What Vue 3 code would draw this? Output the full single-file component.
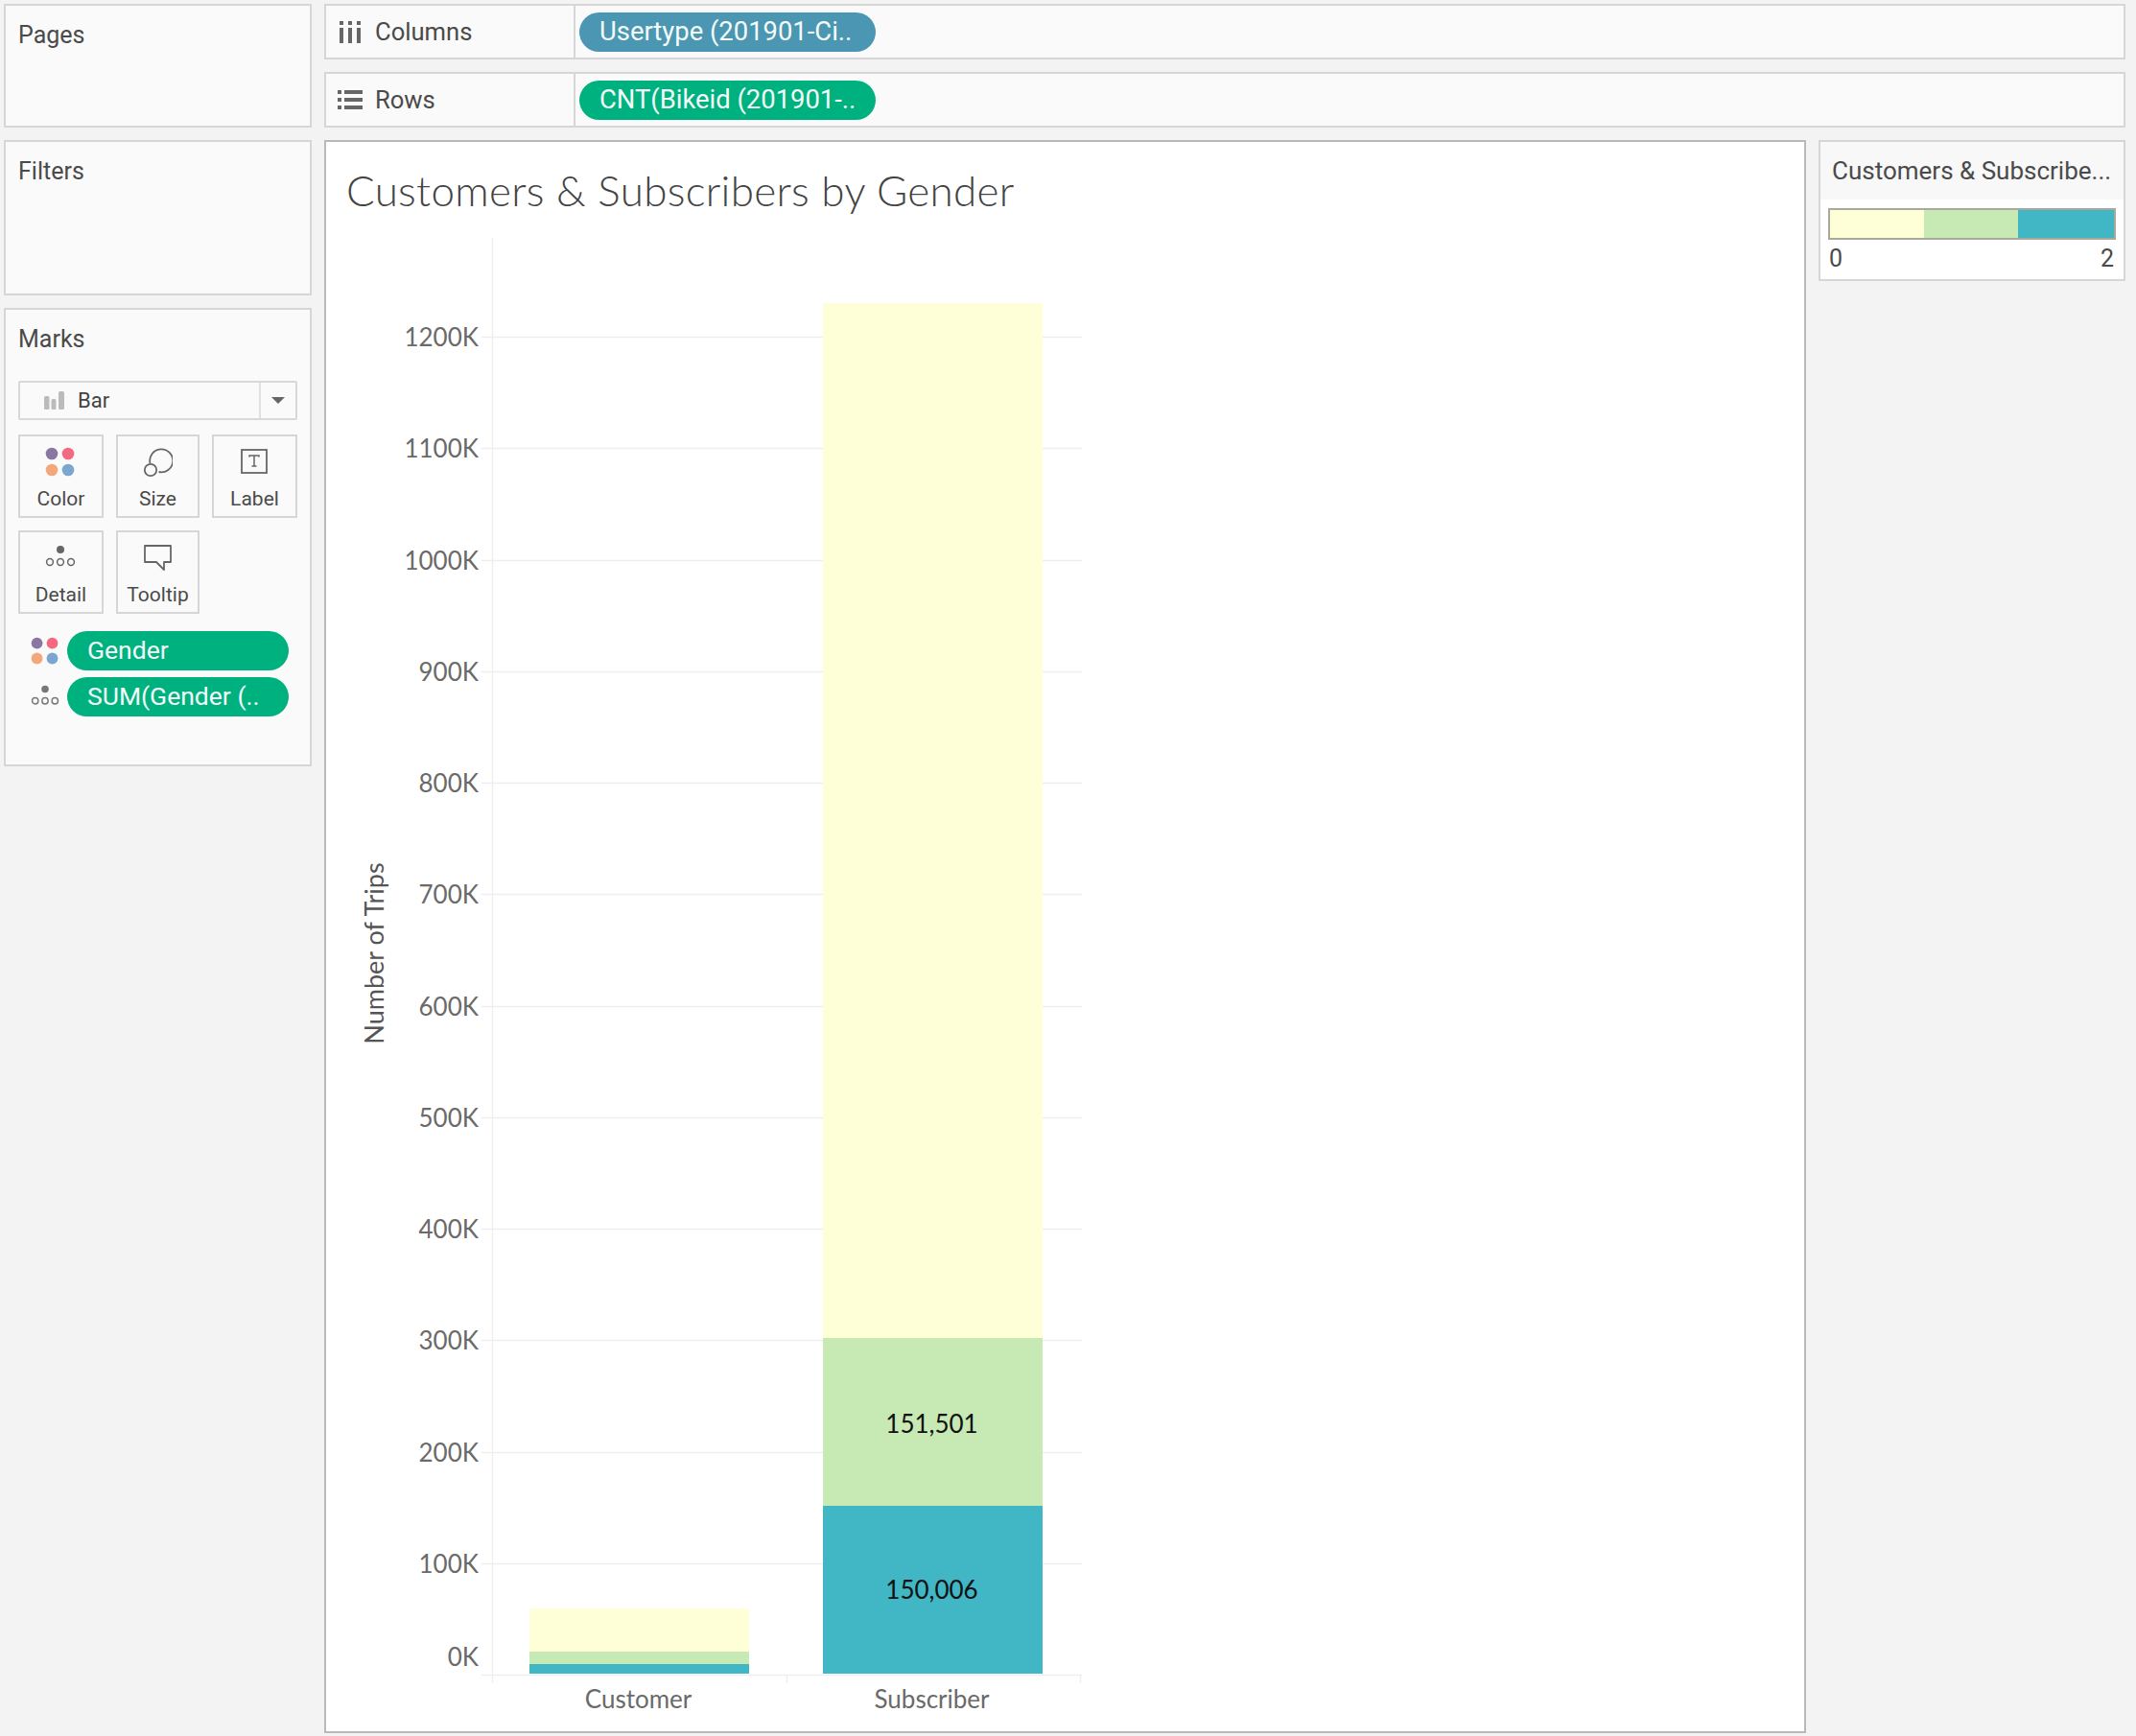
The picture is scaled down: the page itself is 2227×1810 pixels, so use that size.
<script setup>
const ticks = [];
for (let k = 0; k <= 1200; k += 100) {
  // baseline is at y=1746, about 1.1625px per thousand trips
  ticks.push({ label: k + "K", y: Math.round(1746 - k * 1.1625) });
}

const bars = [
  { x: 552, y: 1677, h: 45, fill: "#ffffd7" },
  { x: 552, y: 1722, h: 13, fill: "#c7e9b4" },
  { x: 552, y: 1735, h: 10, fill: "#41b6c4" },
  { x: 858, y: 316, h: 1079, fill: "#ffffd7" },
  { x: 858, y: 1395, h: 175, fill: "#c7e9b4" },
  { x: 858, y: 1570, h: 175, fill: "#41b6c4" }
];

const dotColors = ["#8a76a3", "#f4697f", "#f3a87c", "#7ba6d0"];
</script>

<template>
  <div class="page">
    <aside class="side">
      <section class="card pages"><h3>Pages</h3></section>
      <section class="card filters"><h3>Filters</h3></section>
      <section class="card marks">
        <h3>Marks</h3>
        <div class="mark-type">
          <svg class="bar-icon" width="22" height="20" viewBox="0 0 22 20">
            <rect x="0" y="5" width="5.5" height="14" rx="1.5" fill="#bbb" />
            <rect x="7.5" y="8" width="5" height="11" rx="1.5" fill="#bbb" />
            <rect x="15" y="0" width="6" height="19" rx="1.5" fill="#bbb" />
          </svg>
          <span class="mark-name">Bar</span>
          <div class="mark-arrow"><i></i></div>
        </div>
        <div class="mark-btns">
          <div class="mark-btn">
            <svg width="32" height="32" viewBox="0 0 32 32">
              <circle cx="7" cy="7" r="6.3" :fill="dotColors[0]" />
              <circle cx="24" cy="7" r="6.3" :fill="dotColors[1]" />
              <circle cx="7" cy="24" r="6.3" :fill="dotColors[2]" />
              <circle cx="24" cy="24" r="6.3" :fill="dotColors[3]" />
            </svg>
            <span>Color</span>
          </div>
          <div class="mark-btn">
            <svg width="32" height="32" viewBox="0 0 32 32" fill="none" stroke="#666" stroke-width="1.8">
              <path d="M8.5 17A12 12 0 1 1 17.5 26" />
              <circle cx="9" cy="24" r="6.2" />
            </svg>
            <span>Size</span>
          </div>
          <div class="mark-btn">
            <svg width="32" height="32" viewBox="0 0 32 32" fill="none" stroke="#666" stroke-width="1.8">
              <rect x="3" y="3" width="26" height="24" />
              <path d="M11 10.5V9H21V10.5M16 9V20M13.5 20H18.5" stroke-width="1.5" />
            </svg>
            <span>Label</span>
          </div>
          <div class="mark-btn">
            <svg width="32" height="32" viewBox="0 0 32 32" fill="none" stroke="#666" stroke-width="1.5">
              <circle cx="16" cy="7" r="4" fill="#666" stroke="none" />
              <circle cx="5" cy="20" r="3.4" />
              <circle cx="16" cy="20" r="3.4" />
              <circle cx="27" cy="20" r="3.4" />
            </svg>
            <span>Detail</span>
          </div>
          <div class="mark-btn">
            <svg width="32" height="32" viewBox="0 0 32 32" fill="none" stroke="#666" stroke-width="1.8">
              <path d="M3 3H30V20H23V28L15 20H3Z" stroke-linejoin="round" />
            </svg>
            <span>Tooltip</span>
          </div>
        </div>
        <div class="mark-pill">
          <svg width="30" height="30" viewBox="0 0 32 32">
            <circle cx="7" cy="7" r="6.3" :fill="dotColors[0]" />
            <circle cx="24" cy="7" r="6.3" :fill="dotColors[1]" />
            <circle cx="7" cy="24" r="6.3" :fill="dotColors[2]" />
            <circle cx="24" cy="24" r="6.3" :fill="dotColors[3]" />
          </svg>
          <div class="pill green">Gender</div>
        </div>
        <div class="mark-pill">
          <svg width="30" height="30" viewBox="0 0 32 32" fill="none" stroke="#777" stroke-width="1.5">
            <circle cx="16" cy="7" r="4" fill="#777" stroke="none" />
            <circle cx="5" cy="20" r="3.4" />
            <circle cx="16" cy="20" r="3.4" />
            <circle cx="27" cy="20" r="3.4" />
          </svg>
          <div class="pill green">SUM(Gender (..</div>
        </div>
      </section>
    </aside>

    <main class="main">
      <div class="shelf">
        <div class="shelf-label">
          <svg width="24" height="24" viewBox="0 0 24 24" fill="#666">
            <rect x="1" y="8" width="4" height="16" />
            <rect x="10" y="8" width="4" height="16" />
            <rect x="19" y="8" width="4" height="16" />
            <rect x="1" y="1" width="4" height="4" />
            <rect x="10" y="1" width="4" height="4" />
            <rect x="19" y="1" width="4" height="4" />
          </svg>
          <span>Columns</span>
        </div>
        <div class="pill blue shelf-pill">Usertype (201901-Ci..</div>
      </div>
      <div class="shelf">
        <div class="shelf-label">
          <svg width="26" height="22" viewBox="0 0 26 22" fill="#666">
            <rect x="0" y="1" width="4" height="4" />
            <rect x="7" y="1" width="19" height="4" />
            <rect x="0" y="9" width="4" height="4" />
            <rect x="7" y="9" width="19" height="4" />
            <rect x="0" y="17" width="4" height="4" />
            <rect x="7" y="17" width="19" height="4" />
          </svg>
          <span>Rows</span>
        </div>
        <div class="pill green shelf-pill">CNT(Bikeid (201901-..</div>
      </div>

      <div class="view">
        <div class="chart">
          <svg class="plot" viewBox="340 148 1541 1657" width="1541" height="1657">
            <text x="361" y="215" class="title">Customers &amp; Subscribers by Gender</text>

            <line x1="513.5" y1="248" x2="513.5" y2="1755" class="axis" />
            <line x1="820.5" y1="1746" x2="820.5" y2="1755" class="axis" />
            <line x1="1126.5" y1="1746" x2="1126.5" y2="1755" class="axis" />
            <line
              v-for="t in ticks"
              :key="t.label"
              x1="502"
              x2="1128"
              :y1="t.y + 0.5"
              :y2="t.y + 0.5"
              class="grid"
            />
            <text
              v-for="t in ticks"
              :key="'l' + t.label"
              x="499"
              :y="t.label === '0K' ? 1737 : t.y + 10"
              text-anchor="end"
              class="tick"
            >{{ t.label }}</text>

            <rect
              v-for="(b, i) in bars"
              :key="i"
              :x="b.x"
              :y="b.y"
              width="229"
              :height="b.h"
              :fill="b.fill"
            />

            <text x="971.5" y="1494" text-anchor="middle" class="value">151,501</text>
            <text x="971.5" y="1667" text-anchor="middle" class="value">150,006</text>

            <text x="665.5" y="1781" text-anchor="middle" class="tick">Customer</text>
            <text x="971.5" y="1781" text-anchor="middle" class="tick">Subscriber</text>

            <text transform="translate(400 994) rotate(-90)" text-anchor="middle" class="axis-title">Number of Trips</text>
          </svg>
        </div>

        <div class="legend">
          <div class="legend-head">Customers &amp; Subscribe...</div>
          <div class="ramp">
            <i class="r1"></i><i class="r2"></i><i class="r3"></i>
          </div>
          <div class="ramp-labels"><span>0</span><span>2</span></div>
        </div>
      </div>
    </main>
  </div>
</template>

<style>
html,
body {
  margin: 0;
  background: #f3f3f3;
}
</style>

<style scoped>
.page {
  display: flex;
  gap: 13px;
  width: 2227px;
  height: 1810px;
  box-sizing: border-box;
  padding: 4px 11px 3px 4px;
  background: #f3f3f3;
  font-family: Roboto, "Liberation Sans", sans-serif;
  color: #444;
  overflow: hidden;
}

.side {
  width: 321px;
  display: flex;
  flex-direction: column;
  gap: 13px;
  flex-shrink: 0;
}

.card {
  box-sizing: border-box;
  background: #fafafa;
  border: 2px solid #d6d6d6;
  padding: 16px 13px 0;
}

.card h3 {
  margin: 0;
  font-size: 25px;
  line-height: 30px;
  font-weight: 400;
  color: #4a4a4a;
}

.pages {
  height: 129px;
}

.filters {
  height: 162px;
}

.marks {
  height: 478px;
}

.mark-type {
  display: flex;
  align-items: center;
  height: 41px;
  margin-top: 28px;
  box-sizing: border-box;
  border: 2px solid #d8d8d8;
  border-radius: 2px;
}

.bar-icon {
  margin-left: 25px;
}

.mark-name {
  margin-left: 13px;
  font-size: 22px;
  flex: 1;
}

.mark-arrow {
  width: 36px;
  height: 100%;
  border-left: 2px solid #e0e0e0;
  display: flex;
  align-items: center;
  justify-content: center;
}

.mark-arrow i {
  border-left: 7px solid transparent;
  border-right: 7px solid transparent;
  border-top: 7px solid #666;
}

.mark-btns {
  display: grid;
  grid-template-columns: 89px 87px 89px;
  column-gap: 13px;
  row-gap: 13px;
  margin-top: 15px;
}

.mark-btn {
  box-sizing: border-box;
  height: 87px;
  border: 2px solid #d6d6d6;
  display: flex;
  flex-direction: column;
  align-items: center;
  padding-top: 11px;
  font-size: 21px;
  color: #4a4a4a;
}

.mark-btn svg {
  margin-left: -1px;
}

.mark-btn span {
  margin-top: 9px;
  line-height: 26px;
}

.mark-pill {
  display: flex;
  align-items: center;
  gap: 8px;
  margin-top: 7px;
  padding-left: 13px;
}

.mark-btns + .mark-pill {
  margin-top: 18px;
}

.pill {
  box-sizing: border-box;
  border-radius: 21px;
  height: 41px;
  line-height: 40px;
  color: #f4fbf8;
  font-size: 26.5px;
  padding-left: 21px;
  white-space: nowrap;
}

.mark-pill .pill {
  width: 231px;
}

.green {
  background: #00b180;
}

.blue {
  background: #4b96b2;
}

.main {
  flex: 1;
  display: flex;
  flex-direction: column;
  min-width: 0;
}

.shelf {
  box-sizing: border-box;
  display: flex;
  align-items: center;
  height: 58px;
  margin-bottom: 13px;
  background: #fafafa;
  border: 2px solid #d6d6d6;
}

.shelf-label {
  box-sizing: border-box;
  display: flex;
  align-items: center;
  width: 260px;
  height: 100%;
  padding-left: 12px;
  border-right: 2px solid #d6d6d6;
  font-size: 25.6px;
  color: #4a4a4a;
}

.shelf-label svg {
  width: 26px;
  margin-right: 13px;
}

.shelf-pill {
  width: 309px;
  margin-left: 4px;
  font-size: 27.4px;
}

.view {
  flex: 1;
  display: flex;
  gap: 13px;
  min-height: 0;
}

.chart {
  flex: 1;
  box-sizing: border-box;
  background: #fff;
  border: 2px solid #b9b9b9;
  overflow: hidden;
}

.plot {
  display: block;
  font-family: Lato, "Open Sans", sans-serif;
}

.title {
  font-size: 44px;
  fill: #444;
  font-weight: 300;
  letter-spacing: 0.3px;
}

.tick {
  font-size: 26px;
  fill: #6a6a6a;
}

.value {
  font-size: 26px;
  fill: #111;
}

.axis-title {
  font-size: 27px;
  fill: #555;
}

.axis {
  stroke: #efefef;
  stroke-width: 1.5;
}

.grid {
  stroke: #eeeeee;
  stroke-width: 1.5;
}

.legend {
  width: 320px;
  height: 147px;
  flex-shrink: 0;
  box-sizing: border-box;
  background: #fff;
  border: 2px solid #d6d6d6;
}

.legend-head {
  height: 60px;
  line-height: 60px;
  background: #f8f8f8;
  padding-left: 12px;
  font-size: 26px;
  color: #4a4a4a;
  white-space: nowrap;
}

.ramp {
  display: flex;
  height: 33px;
  margin: 9px 8px 0;
  box-sizing: border-box;
  border: 2px solid #aaa89a;
}

.r1,
.r2 {
  flex: 0 0 98px;
}

.r3 {
  flex: 1;
}

.r1 {
  background: #ffffd7;
}

.r2 {
  background: #c7e9b4;
}

.r3 {
  background: #41b6c4;
}

.ramp-labels {
  display: flex;
  justify-content: space-between;
  margin: 5px 10px 0 9px;
  font-size: 25px;
  line-height: 30px;
  color: #4a4a4a;
}
</style>
